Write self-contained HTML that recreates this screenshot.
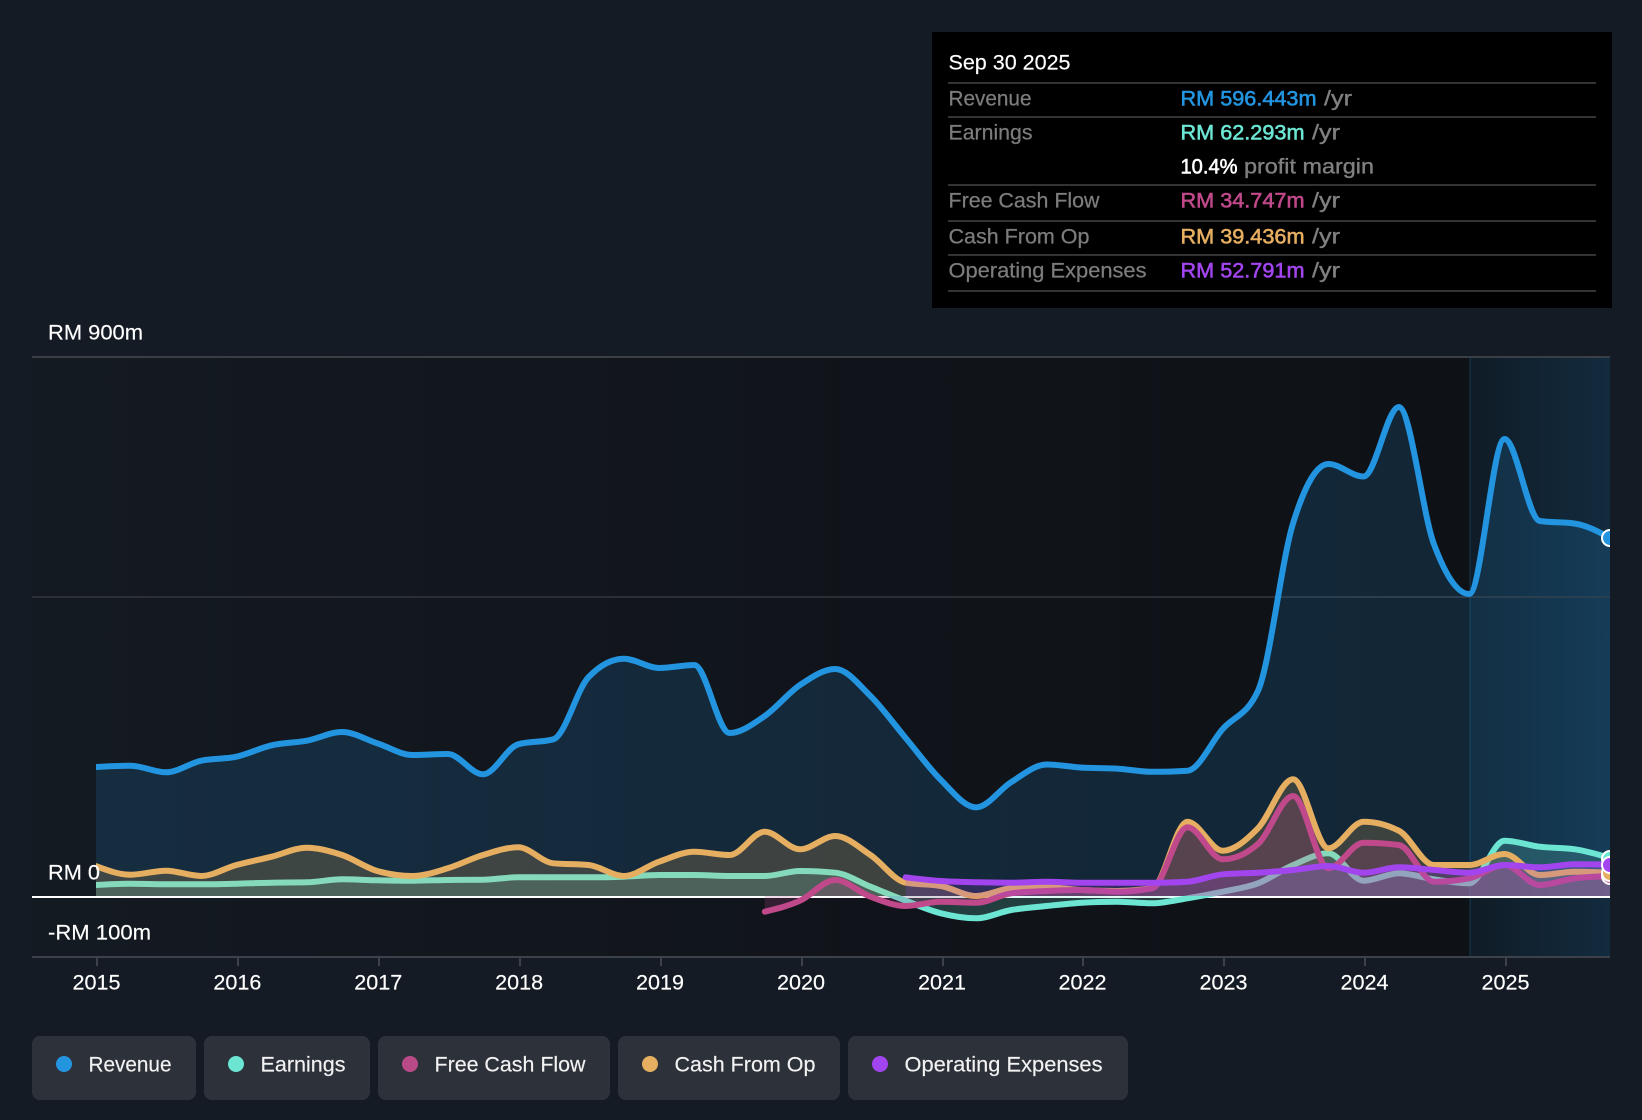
<!DOCTYPE html>
<html>
<head>
<meta charset="utf-8">
<style>
html,body{margin:0;padding:0;background:#151b24;width:1642px;height:1120px;overflow:hidden}
svg{display:block}
text{font-family:"Liberation Sans",Arial,sans-serif;font-size:21.5px}
.w{fill:#fff;stroke:#fff;stroke-width:.15}
.l{fill:#7c7c7c;stroke:#7c7c7c;stroke-width:.25}
.y{fill:#808080;stroke:#808080;stroke-width:.35}
.m{stroke-width:.6}
.ln{fill:none;stroke-width:6;stroke-linecap:round;stroke-linejoin:round}
.ar{fill-opacity:.2;stroke:none}
</style>
</head>
<body>
<svg width="1642" height="1120" viewBox="0 0 1642 1120" xmlns="http://www.w3.org/2000/svg">
<defs>
<linearGradient id="pb" x1="0" x2="1" y1="0" y2="0"><stop offset="0" stop-color="#141a22"/><stop offset=".75" stop-color="#0f1217"/><stop offset="1" stop-color="#0e1116"/></linearGradient>
<linearGradient id="hl" x1="0" x2="1" y1="0" y2="0"><stop offset="0" stop-color="#2394df" stop-opacity=".08"/><stop offset="1" stop-color="#2394df" stop-opacity=".2"/></linearGradient>
<clipPath id="cp"><rect x="96" y="340" width="1514" height="640"/></clipPath>
</defs>
<rect width="1642" height="1120" fill="#151b24"/>
<rect x="32" y="357" width="1578" height="600" fill="url(#pb)"/>
<rect x="1470" y="357" width="140" height="600" fill="url(#hl)"/>
<rect x="1469" y="357" width="2" height="600" fill="#2394df" fill-opacity=".14"/>
<rect x="32" y="356" width="1578" height="2" fill="#3a3f45"/>
<rect x="32" y="596" width="1578" height="2" fill="#2b2f35"/>
<rect x="32" y="896" width="1578" height="2" fill="#fff"/>
<rect x="32" y="956" width="1578" height="2" fill="#3d414a"/>
<g fill="#3d414a">
<rect x="96" y="957" width="2" height="9"/><rect x="237" y="957" width="2" height="9"/><rect x="378" y="957" width="2" height="9"/><rect x="519" y="957" width="2" height="9"/><rect x="660" y="957" width="2" height="9"/><rect x="801" y="957" width="2" height="9"/><rect x="942" y="957" width="2" height="9"/><rect x="1082" y="957" width="2" height="9"/><rect x="1223" y="957" width="2" height="9"/><rect x="1364" y="957" width="2" height="9"/><rect x="1505" y="957" width="2" height="9"/>
</g>
<g clip-path="url(#cp)">
<g transform="translate(-1.5 0)">
<!-- Revenue -->
<path class="ar" fill="#2394df" style="fill-opacity:.16" d="M97 767c11.74 -.65 23.48 -1.3 35.225 -1.3c11.74 0 23.48 6.6 35.225 6.6c11.74 0 23.48 -9 35.225 -11.6c11.74 -2.6 23.48 -1.4 35.225 -4c11.74 -2.6 23.48 -8.7 35.225 -11.4c11.74 -2.7 23.48 -2.4 35.225 -4.6c11.74 -2.2 23.48 -8.7 35.225 -8.7c11.74 0 23.48 7.5 35.225 11.3c11.74 3.8 23.48 11.7 35.225 11.7c11.74 0 23.48 -1 35.225 -1c11.74 0 23.48 20.3 35.225 20.3c11.74 0 23.48 -26.7 35.225 -30c11.74 -3.3 23.48 -1.7 35.225 -5c11.74 -3.3 23.48 -50.1 35.225 -62.3c11.74 -12.2 23.48 -18.3 35.225 -18.3c11.74 0 23.48 9.3 35.225 9.3c11.74 0 23.48 -3 35.225 -3c11.74 0 23.48 68 35.225 68c11.74 0 23.48 -9 35.225 -17c11.74 -8 23.48 -23.2 35.225 -31c11.74 -7.8 23.48 -16 35.225 -16c11.74 0 23.48 15.5 35.225 27c11.74 11.5 23.48 28 35.225 42c11.74 14 23.48 30.4 35.225 42c11.74 11.6 23.48 27.4 35.225 27.4c11.74 0 23.48 -18.2 35.225 -25.4c11.74 -7.2 23.48 -17.5 35.225 -17.5c11.74 0 23.48 2.4 35.225 3.1c11.74 .7 23.48 .3 35.225 1c11.74 .7 23.48 3.2 35.225 3.2c11.74 0 23.48 -.4 35.225 -1.1c11.74 -.7 23.48 -28.4 35.225 -41.7c11.74 -13.3 23.48 -12.7 35.225 -38c11.74 -25.3 23.48 -130.2 35.225 -168c11.74 -37.8 23.48 -59 35.225 -59c11.74 0 23.48 12.5 35.225 12.5c11.74 0 23.48 -69.5 35.225 -69.5c11.74 0 23.48 106.3 35.225 137.5c11.74 31.2 23.48 49.5 35.225 49.5c11.74 0 23.48 -155 35.225 -155c11.74 0 23.48 80.3 35.225 82c11.74 1.7 23.48 .9 35.225 2.6c11.74 1.7 23.48 8.1 35.225 14.4L1611.7 896L97 896Z"/>
<path class="ln" stroke="#2394df" d="M97 767c11.74 -.65 23.48 -1.3 35.225 -1.3c11.74 0 23.48 6.6 35.225 6.6c11.74 0 23.48 -9 35.225 -11.6c11.74 -2.6 23.48 -1.4 35.225 -4c11.74 -2.6 23.48 -8.7 35.225 -11.4c11.74 -2.7 23.48 -2.4 35.225 -4.6c11.74 -2.2 23.48 -8.7 35.225 -8.7c11.74 0 23.48 7.5 35.225 11.3c11.74 3.8 23.48 11.7 35.225 11.7c11.74 0 23.48 -1 35.225 -1c11.74 0 23.48 20.3 35.225 20.3c11.74 0 23.48 -26.7 35.225 -30c11.74 -3.3 23.48 -1.7 35.225 -5c11.74 -3.3 23.48 -50.1 35.225 -62.3c11.74 -12.2 23.48 -18.3 35.225 -18.3c11.74 0 23.48 9.3 35.225 9.3c11.74 0 23.48 -3 35.225 -3c11.74 0 23.48 68 35.225 68c11.74 0 23.48 -9 35.225 -17c11.74 -8 23.48 -23.2 35.225 -31c11.74 -7.8 23.48 -16 35.225 -16c11.74 0 23.48 15.5 35.225 27c11.74 11.5 23.48 28 35.225 42c11.74 14 23.48 30.4 35.225 42c11.74 11.6 23.48 27.4 35.225 27.4c11.74 0 23.48 -18.2 35.225 -25.4c11.74 -7.2 23.48 -17.5 35.225 -17.5c11.74 0 23.48 2.4 35.225 3.1c11.74 .7 23.48 .3 35.225 1c11.74 .7 23.48 3.2 35.225 3.2c11.74 0 23.48 -.4 35.225 -1.1c11.74 -.7 23.48 -28.4 35.225 -41.7c11.74 -13.3 23.48 -12.7 35.225 -38c11.74 -25.3 23.48 -130.2 35.225 -168c11.74 -37.8 23.48 -59 35.225 -59c11.74 0 23.48 12.5 35.225 12.5c11.74 0 23.48 -69.5 35.225 -69.5c11.74 0 23.48 106.3 35.225 137.5c11.74 31.2 23.48 49.5 35.225 49.5c11.74 0 23.48 -155 35.225 -155c11.74 0 23.48 80.3 35.225 82c11.74 1.7 23.48 .9 35.225 2.6c11.74 1.7 23.48 8.1 35.225 14.4"/>
<!-- Earnings -->
<path class="ar" fill="#6ce5d3" d="M97 885c11.74 -.65 23.48 -1.3 35.225 -1.3c11.74 0 23.48 .6 35.225 .6c11.74 0 23.48 0 35.225 0c11.74 0 23.48 -.3 35.225 -.6c11.74 -.3 23.48 -.8 35.225 -1c11.74 -.2 23.48 -.15 35.225 -.4c11.74 -.25 23.48 -3 35.225 -3c11.74 0 23.48 .8 35.225 1c11.74 .2 23.48 .4 35.225 .4c11.74 0 23.48 -.5 35.225 -.7c11.74 -.2 23.48 -.1 35.225 -.3c11.74 -.2 23.48 -2.4 35.225 -2.4c11.74 0 23.48 0 35.225 0c11.74 0 23.48 0 35.225 0c11.74 0 23.48 -.2 35.225 -.6c11.74 -.4 23.48 -1.7 35.225 -1.7c11.74 0 23.48 0 35.225 0c11.74 0 23.48 1 35.225 1c11.74 0 23.48 0 35.225 0c11.74 0 23.48 -5 35.225 -5c11.74 0 23.48 .6 35.225 1.7c11.74 1.1 23.48 9.3 35.225 14c11.74 4.7 23.48 9.6 35.225 14c11.74 4.4 23.48 9.7 35.225 12.6c11.74 2.9 23.48 5 35.225 5c11.74 0 23.48 -6.3 35.225 -8.3c11.74 -2 23.48 -2.8 35.225 -4c11.74 -1.2 23.48 -2.6 35.225 -3.3c11.74 -.7 23.48 -1 35.225 -1c11.74 0 23.48 1.6 35.225 1.6c11.74 0 23.48 -3.1 35.225 -5c11.74 -1.9 23.48 -4.1 35.225 -6.6c11.74 -2.5 23.48 -4 35.225 -8.4c11.74 -4.4 23.48 -13.3 35.225 -18.3c11.74 -5 23.48 -11.7 35.225 -11.7c11.74 0 23.48 27.4 35.225 27.4c11.74 0 23.48 -7.4 35.225 -7.4c11.74 0 23.48 4.3 35.225 6c11.74 1.7 23.48 4 35.225 4c11.74 0 23.48 -42.6 35.225 -42.6c11.74 0 23.48 4.6 35.225 6c11.74 1.4 23.48 .9 35.225 2.6c11.74 1.7 23.48 5.2 35.225 8.7L1611.7 896L97 896Z"/>
<path class="ln" stroke="#6ce5d3" d="M97 885c11.74 -.65 23.48 -1.3 35.225 -1.3c11.74 0 23.48 .6 35.225 .6c11.74 0 23.48 0 35.225 0c11.74 0 23.48 -.3 35.225 -.6c11.74 -.3 23.48 -.8 35.225 -1c11.74 -.2 23.48 -.15 35.225 -.4c11.74 -.25 23.48 -3 35.225 -3c11.74 0 23.48 .8 35.225 1c11.74 .2 23.48 .4 35.225 .4c11.74 0 23.48 -.5 35.225 -.7c11.74 -.2 23.48 -.1 35.225 -.3c11.74 -.2 23.48 -2.4 35.225 -2.4c11.74 0 23.48 0 35.225 0c11.74 0 23.48 0 35.225 0c11.74 0 23.48 -.2 35.225 -.6c11.74 -.4 23.48 -1.7 35.225 -1.7c11.74 0 23.48 0 35.225 0c11.74 0 23.48 1 35.225 1c11.74 0 23.48 0 35.225 0c11.74 0 23.48 -5 35.225 -5c11.74 0 23.48 .6 35.225 1.7c11.74 1.1 23.48 9.3 35.225 14c11.74 4.7 23.48 9.6 35.225 14c11.74 4.4 23.48 9.7 35.225 12.6c11.74 2.9 23.48 5 35.225 5c11.74 0 23.48 -6.3 35.225 -8.3c11.74 -2 23.48 -2.8 35.225 -4c11.74 -1.2 23.48 -2.6 35.225 -3.3c11.74 -.7 23.48 -1 35.225 -1c11.74 0 23.48 1.6 35.225 1.6c11.74 0 23.48 -3.1 35.225 -5c11.74 -1.9 23.48 -4.1 35.225 -6.6c11.74 -2.5 23.48 -4 35.225 -8.4c11.74 -4.4 23.48 -13.3 35.225 -18.3c11.74 -5 23.48 -11.7 35.225 -11.7c11.74 0 23.48 27.4 35.225 27.4c11.74 0 23.48 -7.4 35.225 -7.4c11.74 0 23.48 4.3 35.225 6c11.74 1.7 23.48 4 35.225 4c11.74 0 23.48 -42.6 35.225 -42.6c11.74 0 23.48 4.6 35.225 6c11.74 1.4 23.48 .9 35.225 2.6c11.74 1.7 23.48 5.2 35.225 8.7"/>
<!-- Cash From Op -->
<path class="ar" fill="#e5ae60" d="M97 866c11.74 4.35 23.48 8.7 35.225 8.7c11.74 0 23.48 -4 35.225 -4c11.74 0 23.48 5.3 35.225 5.3c11.74 0 23.48 -7.8 35.225 -11c11.74 -3.2 23.48 -5.4 35.225 -8.3c11.74 -2.9 23.48 -9 35.225 -9c11.74 0 23.48 3.4 35.225 7.3c11.74 3.9 23.48 12.7 35.225 16c11.74 3.3 23.48 5 35.225 5c11.74 0 23.48 -4.2 35.225 -7.7c11.74 -3.5 23.48 -9.8 35.225 -13.3c11.74 -3.5 23.48 -7.7 35.225 -7.7c11.74 0 23.48 14.9 35.225 16c11.74 1.1 23.48 .6 35.225 1.7c11.74 1.1 23.48 11 35.225 11c11.74 0 23.48 -10.3 35.225 -14.3c11.74 -4 23.48 -10 35.225 -10c11.74 0 23.48 3.3 35.225 3.3c11.74 0 23.48 -23.3 35.225 -23.3c11.74 0 23.48 17.6 35.225 17.6c11.74 0 23.48 -13.3 35.225 -13.3c11.74 0 23.48 11.2 35.225 19c11.74 7.8 23.48 25.5 35.225 27.7c11.74 2.2 23.48 1.1 35.225 3.3c11.74 2.2 23.48 10 35.225 10c11.74 0 23.48 -7 35.225 -7.7c11.74 -.7 23.48 -1 35.225 -1c11.74 0 23.48 2.1 35.225 2.7c11.74 .6 23.48 1 35.225 1c11.74 0 23.48 -1 35.225 -3c11.74 -2 23.48 -66.3 35.225 -66.3c11.74 0 23.48 29 35.225 29c11.74 0 23.48 -10.5 35.225 -22.4c11.74 -11.9 23.48 -49 35.225 -49c11.74 0 23.48 69 35.225 69c11.74 0 23.48 -26.6 35.225 -26.6c11.74 0 23.48 3 35.225 9c11.74 6 23.48 34.3 35.225 34.3c11.74 0 23.48 0 35.225 0c11.74 0 23.48 -11 35.225 -11c11.74 0 23.48 21 35.225 21c11.74 0 23.48 -3.3 35.225 -3.3c11.74 0 23.48 .4 35.225 .8L1611.7 896L97 896Z"/>
<path class="ln" stroke="#e5ae60" d="M97 866c11.74 4.35 23.48 8.7 35.225 8.7c11.74 0 23.48 -4 35.225 -4c11.74 0 23.48 5.3 35.225 5.3c11.74 0 23.48 -7.8 35.225 -11c11.74 -3.2 23.48 -5.4 35.225 -8.3c11.74 -2.9 23.48 -9 35.225 -9c11.74 0 23.48 3.4 35.225 7.3c11.74 3.9 23.48 12.7 35.225 16c11.74 3.3 23.48 5 35.225 5c11.74 0 23.48 -4.2 35.225 -7.7c11.74 -3.5 23.48 -9.8 35.225 -13.3c11.74 -3.5 23.48 -7.7 35.225 -7.7c11.74 0 23.48 14.9 35.225 16c11.74 1.1 23.48 .6 35.225 1.7c11.74 1.1 23.48 11 35.225 11c11.74 0 23.48 -10.3 35.225 -14.3c11.74 -4 23.48 -10 35.225 -10c11.74 0 23.48 3.3 35.225 3.3c11.74 0 23.48 -23.3 35.225 -23.3c11.74 0 23.48 17.6 35.225 17.6c11.74 0 23.48 -13.3 35.225 -13.3c11.74 0 23.48 11.2 35.225 19c11.74 7.8 23.48 25.5 35.225 27.7c11.74 2.2 23.48 1.1 35.225 3.3c11.74 2.2 23.48 10 35.225 10c11.74 0 23.48 -7 35.225 -7.7c11.74 -.7 23.48 -1 35.225 -1c11.74 0 23.48 2.1 35.225 2.7c11.74 .6 23.48 1 35.225 1c11.74 0 23.48 -1 35.225 -3c11.74 -2 23.48 -66.3 35.225 -66.3c11.74 0 23.48 29 35.225 29c11.74 0 23.48 -10.5 35.225 -22.4c11.74 -11.9 23.48 -49 35.225 -49c11.74 0 23.48 69 35.225 69c11.74 0 23.48 -26.6 35.225 -26.6c11.74 0 23.48 3 35.225 9c11.74 6 23.48 34.3 35.225 34.3c11.74 0 23.48 0 35.225 0c11.74 0 23.48 -11 35.225 -11c11.74 0 23.48 21 35.225 21c11.74 0 23.48 -3.3 35.225 -3.3c11.74 0 23.48 .4 35.225 .8"/>
<!-- Free Cash Flow -->
<path class="ar" fill="#c0498b" d="M766.3 911.7c11.74 -2.85 23.48 -5.7 35.225 -11c11.74 -5.3 23.48 -20.7 35.225 -20.7c11.74 0 23.48 12.4 35.225 16.7c11.74 4.3 23.48 9.3 35.225 9.3c11.74 0 23.48 -4.3 35.225 -4.3c11.74 0 23.48 1 35.225 1c11.74 0 23.48 -7.9 35.225 -9.4c11.74 -1.5 23.48 -1.75 35.225 -2.3c11.74 -.55 23.48 -1 35.225 -1c11.74 0 23.48 1.7 35.225 1.7c11.74 0 23.48 -1.1 35.225 -3.4c11.74 -2.3 23.48 -61 35.225 -61c11.74 0 23.48 32 35.225 32c11.74 0 23.48 -5.1 35.225 -15.3c11.74 -10.2 23.48 -48 35.225 -48c11.74 0 23.48 72.3 35.225 72.3c11.74 0 23.48 -25.6 35.225 -25.6c11.74 0 23.48 .8 35.225 2.3c11.74 1.5 23.48 36.7 35.225 36.7c11.74 0 23.48 -1.1 35.225 -3.4c11.74 -2.3 23.48 -13.3 35.225 -13.3c11.74 0 23.48 20 35.225 20c11.74 0 23.48 -5.2 35.225 -6.7c11.74 -1.5 23.48 -1.9 35.225 -2.3L1611.7 896L766.3 896Z"/>
<path class="ln" stroke="#c0498b" d="M766.3 911.7c11.74 -2.85 23.48 -5.7 35.225 -11c11.74 -5.3 23.48 -20.7 35.225 -20.7c11.74 0 23.48 12.4 35.225 16.7c11.74 4.3 23.48 9.3 35.225 9.3c11.74 0 23.48 -4.3 35.225 -4.3c11.74 0 23.48 1 35.225 1c11.74 0 23.48 -7.9 35.225 -9.4c11.74 -1.5 23.48 -1.75 35.225 -2.3c11.74 -.55 23.48 -1 35.225 -1c11.74 0 23.48 1.7 35.225 1.7c11.74 0 23.48 -1.1 35.225 -3.4c11.74 -2.3 23.48 -61 35.225 -61c11.74 0 23.48 32 35.225 32c11.74 0 23.48 -5.1 35.225 -15.3c11.74 -10.2 23.48 -48 35.225 -48c11.74 0 23.48 72.3 35.225 72.3c11.74 0 23.48 -25.6 35.225 -25.6c11.74 0 23.48 .8 35.225 2.3c11.74 1.5 23.48 36.7 35.225 36.7c11.74 0 23.48 -1.1 35.225 -3.4c11.74 -2.3 23.48 -13.3 35.225 -13.3c11.74 0 23.48 20 35.225 20c11.74 0 23.48 -5.2 35.225 -6.7c11.74 -1.5 23.48 -1.9 35.225 -2.3"/>
<!-- Operating Expenses -->
<path class="ar" fill="#a245ef" d="M907.2 877.3c11.74 1.45 23.48 2.9 35.225 3.7c11.74 .8 23.48 1 35.225 1.3c11.74 .3 23.48 .4 35.225 .4c11.74 0 23.48 -1 35.225 -1c11.74 0 23.48 1 35.225 1c11.74 0 23.48 0 35.225 0c11.74 0 23.48 0 35.225 0c11.74 0 23.48 -.3 35.225 -1c11.74 -.7 23.48 -6.3 35.225 -7.4c11.74 -1.1 23.48 -.9 35.225 -1.6c11.74 -.7 23.48 -1.6 35.225 -2.7c11.74 -1.1 23.48 -4 35.225 -4c11.74 0 23.48 6.7 35.225 6.7c11.74 0 23.48 -5.4 35.225 -5.4c11.74 0 23.48 1.8 35.225 2.7c11.74 .9 23.48 2.7 35.225 2.7c11.74 0 23.48 -7.7 35.225 -7.7c11.74 0 23.48 2.3 35.225 2.3c11.74 0 23.48 -3 35.225 -3c11.74 0 23.48 .1 35.225 .2L1611.7 896L907.2 896Z"/>
<path class="ln" stroke="#a245ef" d="M907.2 877.3c11.74 1.45 23.48 2.9 35.225 3.7c11.74 .8 23.48 1 35.225 1.3c11.74 .3 23.48 .4 35.225 .4c11.74 0 23.48 -1 35.225 -1c11.74 0 23.48 1 35.225 1c11.74 0 23.48 0 35.225 0c11.74 0 23.48 0 35.225 0c11.74 0 23.48 -.3 35.225 -1c11.74 -.7 23.48 -6.3 35.225 -7.4c11.74 -1.1 23.48 -.9 35.225 -1.6c11.74 -.7 23.48 -1.6 35.225 -2.7c11.74 -1.1 23.48 -4 35.225 -4c11.74 0 23.48 6.7 35.225 6.7c11.74 0 23.48 -5.4 35.225 -5.4c11.74 0 23.48 1.8 35.225 2.7c11.74 .9 23.48 2.7 35.225 2.7c11.74 0 23.48 -7.7 35.225 -7.7c11.74 0 23.48 2.3 35.225 2.3c11.74 0 23.48 -3 35.225 -3c11.74 0 23.48 .1 35.225 .2"/>
</g>
<g stroke="#fff" stroke-width="2">
<circle cx="1610" cy="538" r="8" fill="#2394df"/>
<circle cx="1610" cy="859" r="8" fill="#6ce5d3"/>
<circle cx="1610" cy="876" r="8" fill="#c0498b"/>
<circle cx="1610" cy="873" r="8" fill="#e5ae60"/>
<circle cx="1610" cy="865" r="8" fill="#a245ef"/>
</g>
</g>

<text class="w" x="48" y="339.5" textLength="95" lengthAdjust="spacingAndGlyphs">RM 900m</text>
<text class="w" x="48" y="879.5" textLength="52" lengthAdjust="spacingAndGlyphs">RM 0</text>
<text class="w" x="48" y="939.5" textLength="103" lengthAdjust="spacingAndGlyphs">-RM 100m</text>
<g class="w" text-anchor="middle">
<text x="96.5" y="989.5" textLength="48" lengthAdjust="spacingAndGlyphs">2015</text><text x="237.4" y="989.5" textLength="48" lengthAdjust="spacingAndGlyphs">2016</text><text x="378.3" y="989.5" textLength="48" lengthAdjust="spacingAndGlyphs">2017</text><text x="519.2" y="989.5" textLength="48" lengthAdjust="spacingAndGlyphs">2018</text><text x="660" y="989.5" textLength="48" lengthAdjust="spacingAndGlyphs">2019</text><text x="801" y="989.5" textLength="48" lengthAdjust="spacingAndGlyphs">2020</text><text x="942" y="989.5" textLength="48" lengthAdjust="spacingAndGlyphs">2021</text><text x="1082.5" y="989.5" textLength="48" lengthAdjust="spacingAndGlyphs">2022</text><text x="1223.5" y="989.5" textLength="48" lengthAdjust="spacingAndGlyphs">2023</text><text x="1364.5" y="989.5" textLength="48" lengthAdjust="spacingAndGlyphs">2024</text><text x="1505.5" y="989.5" textLength="48" lengthAdjust="spacingAndGlyphs">2025</text>
</g>

<rect x="932" y="32" width="680" height="276" fill="#000"/>
<g fill="#333">
<rect x="948" y="82" width="648" height="2"/><rect x="948" y="116" width="648" height="2"/><rect x="948" y="184" width="648" height="2"/><rect x="948" y="220" width="648" height="2"/><rect x="948" y="254" width="648" height="2"/><rect x="948" y="290" width="648" height="2"/>
</g>
<text class="w" x="948.5" y="69.5" textLength="122" lengthAdjust="spacingAndGlyphs">Sep 30 2025</text>
<text class="l" x="948.5" y="105.5" textLength="83" lengthAdjust="spacingAndGlyphs">Revenue</text>
<text class="l" x="948.5" y="139.5" textLength="84" lengthAdjust="spacingAndGlyphs">Earnings</text>
<text class="l" x="948.5" y="207.5" textLength="151" lengthAdjust="spacingAndGlyphs">Free Cash Flow</text>
<text class="l" x="948.5" y="243.5" textLength="141" lengthAdjust="spacingAndGlyphs">Cash From Op</text>
<text class="l" x="948.5" y="277.5" textLength="198" lengthAdjust="spacingAndGlyphs">Operating Expenses</text>

<text class="m" fill="#2394df" stroke="#2394df" x="1180.5" y="105.5" textLength="136" lengthAdjust="spacingAndGlyphs">RM 596.443m</text><text class="y" x="1324" y="105.5" textLength="28" lengthAdjust="spacingAndGlyphs">/yr</text>
<text class="m" fill="#6ce5d3" stroke="#6ce5d3" x="1180.5" y="139.5" textLength="124" lengthAdjust="spacingAndGlyphs">RM 62.293m</text><text class="y" x="1312" y="139.5" textLength="28" lengthAdjust="spacingAndGlyphs">/yr</text>
<text class="w" style="stroke-width:.6" x="1180.5" y="173.5" textLength="57" lengthAdjust="spacingAndGlyphs">10.4%</text><text class="y" x="1244" y="173.5" textLength="130" lengthAdjust="spacingAndGlyphs">profit margin</text>
<text class="m" fill="#c0498b" stroke="#c0498b" x="1180.5" y="207.5" textLength="124" lengthAdjust="spacingAndGlyphs">RM 34.747m</text><text class="y" x="1312" y="207.5" textLength="28" lengthAdjust="spacingAndGlyphs">/yr</text>
<text class="m" fill="#e5ae60" stroke="#e5ae60" x="1180.5" y="243.5" textLength="124" lengthAdjust="spacingAndGlyphs">RM 39.436m</text><text class="y" x="1312" y="243.5" textLength="28" lengthAdjust="spacingAndGlyphs">/yr</text>
<text class="m" fill="#a245ef" stroke="#a245ef" x="1180.5" y="277.5" textLength="124" lengthAdjust="spacingAndGlyphs">RM 52.791m</text><text class="y" x="1312" y="277.5" textLength="28" lengthAdjust="spacingAndGlyphs">/yr</text>

<g fill="#2d313a">
<rect x="32" y="1036" width="164" height="64" rx="8"/><rect x="204" y="1036" width="166" height="64" rx="8"/><rect x="378" y="1036" width="232" height="64" rx="8"/><rect x="618" y="1036" width="222" height="64" rx="8"/><rect x="848" y="1036" width="280" height="64" rx="8"/>
</g>
<circle cx="64" cy="1064" r="8" fill="#2394df"/><circle cx="236" cy="1064" r="8" fill="#6ce5d3"/><circle cx="410" cy="1064" r="8" fill="#b94a88"/><circle cx="650" cy="1064" r="8" fill="#e5ae60"/><circle cx="880" cy="1064" r="8" fill="#a245ef"/>
<g fill="#f2f2f2" stroke="#f2f2f2" stroke-width=".15">
<text x="88.5" y="1071.5" textLength="83" lengthAdjust="spacingAndGlyphs">Revenue</text>
<text x="260.5" y="1071.5" textLength="85" lengthAdjust="spacingAndGlyphs">Earnings</text>
<text x="434.5" y="1071.5" textLength="151" lengthAdjust="spacingAndGlyphs">Free Cash Flow</text>
<text x="674.5" y="1071.5" textLength="141" lengthAdjust="spacingAndGlyphs">Cash From Op</text>
<text x="904.5" y="1071.5" textLength="198" lengthAdjust="spacingAndGlyphs">Operating Expenses</text>
</g>
</svg>
</body>
</html>
